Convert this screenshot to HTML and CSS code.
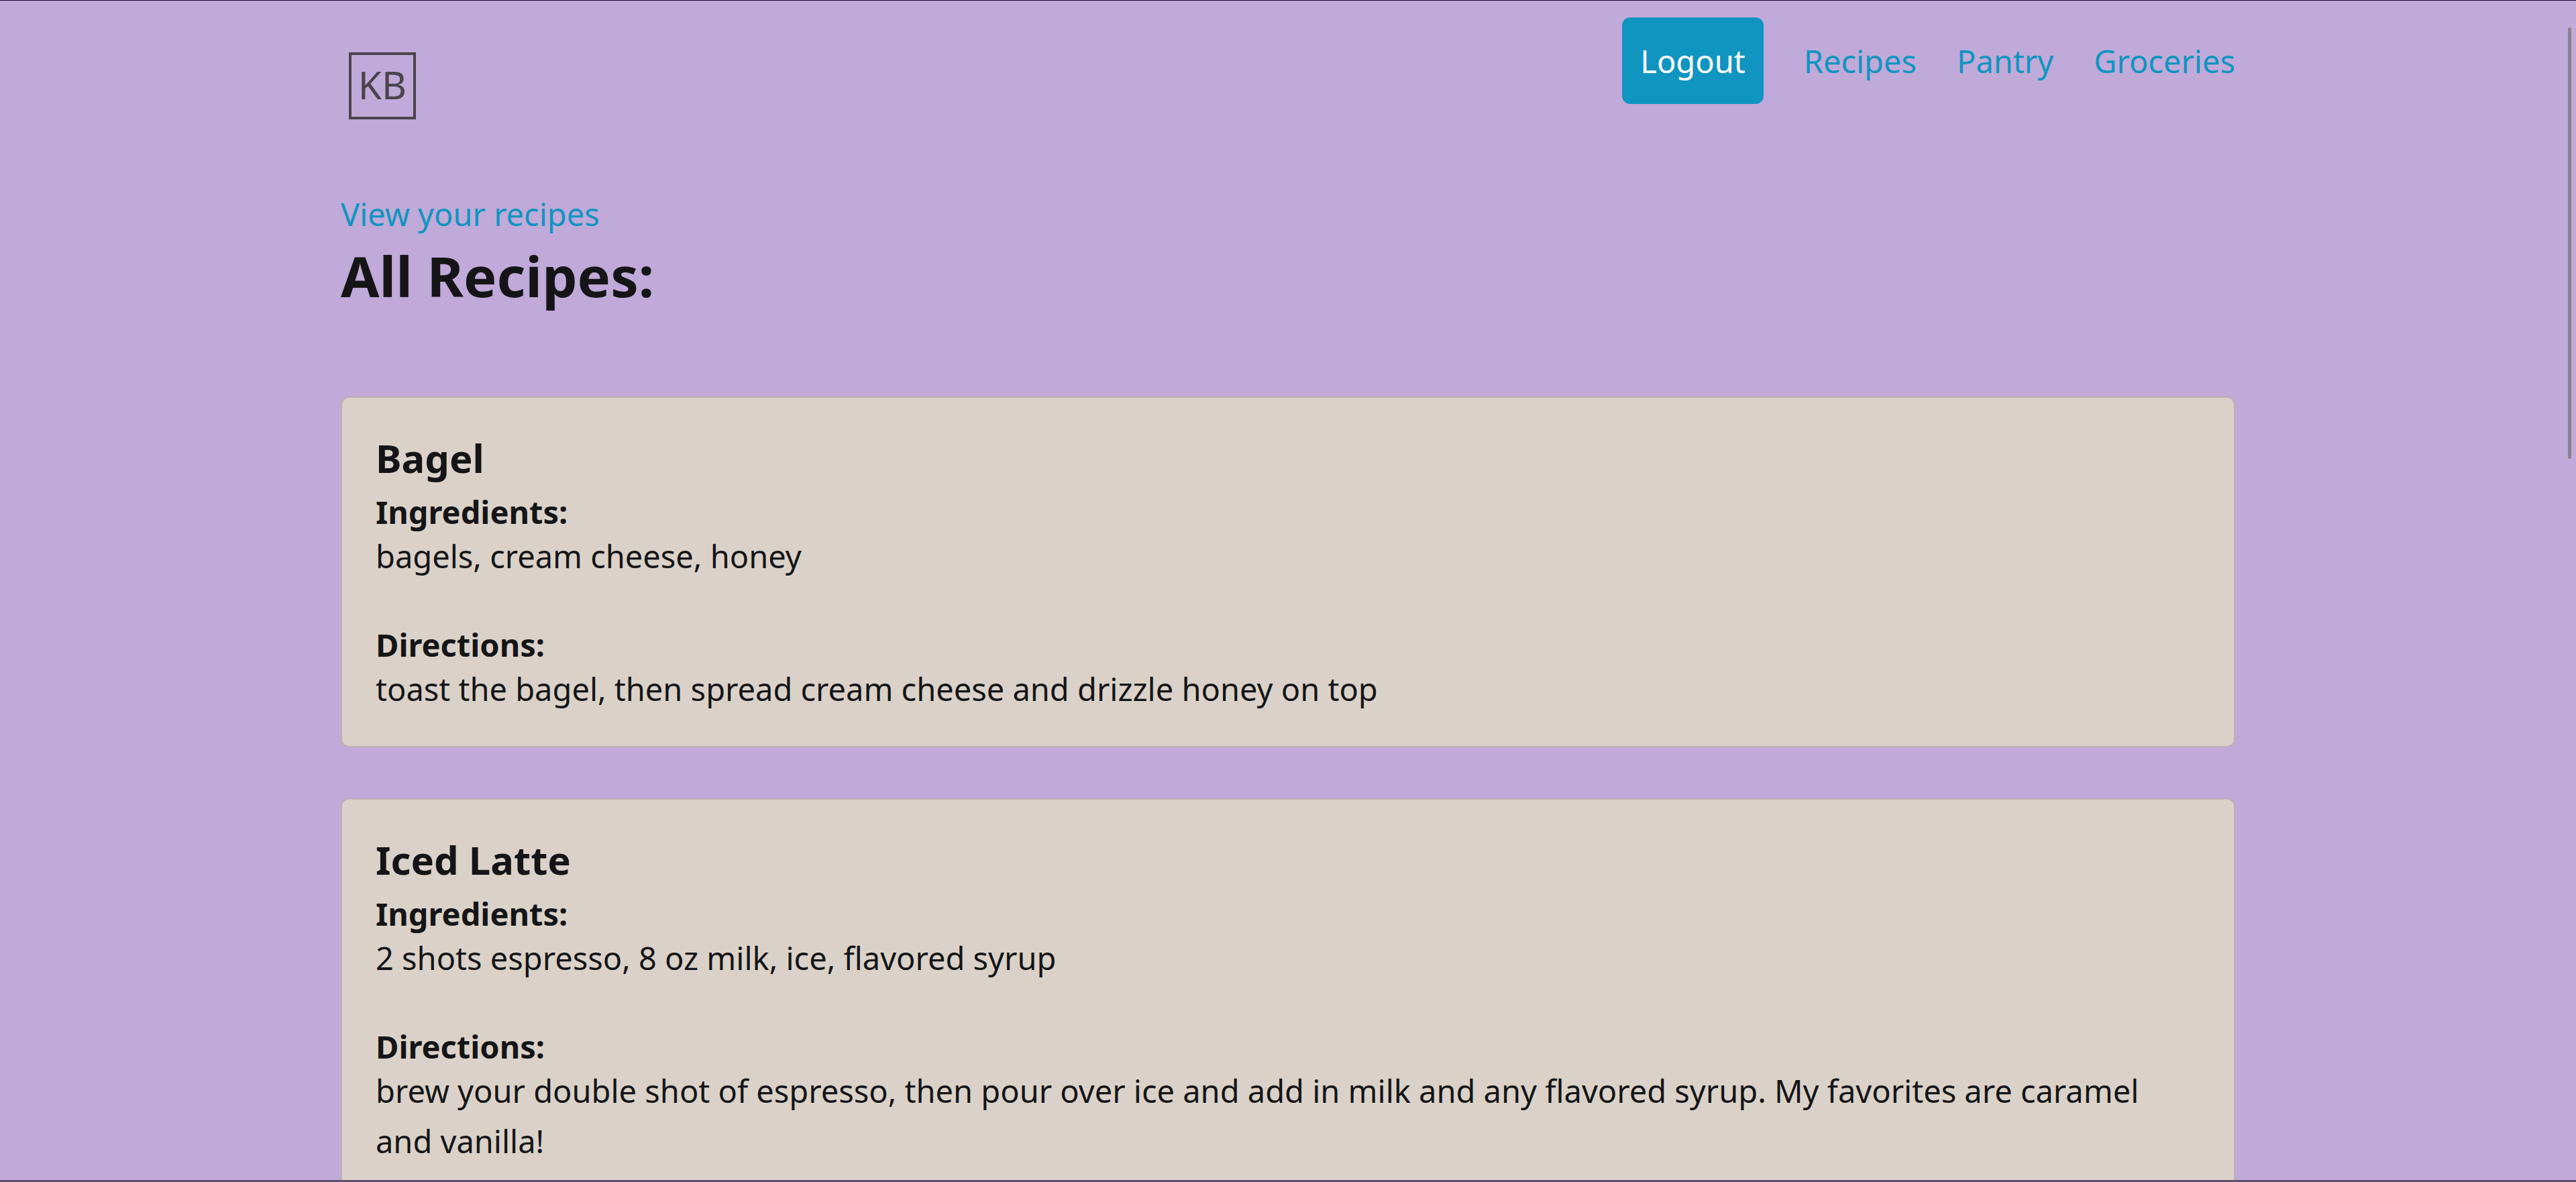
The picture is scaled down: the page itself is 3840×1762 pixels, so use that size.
FILE: index.html
```html
<!DOCTYPE html>
<html lang="en">
<head>
<meta charset="utf-8">
<meta name="viewport" content="width=device-width, initial-scale=1">
<title>All Recipes</title>
<link rel="stylesheet" href="styles.css">
</head>
<body>
<div class="page">
  <header class="container header">
    <a class="logo" href="#" aria-label="Home">
      <svg class="logo-mark" viewBox="0 0 100 100" width="100" height="100">
        <rect class="logo-frame" x="2" y="2" width="96" height="96"/>
        <text class="logo-text" x="50" y="70" text-anchor="middle">KB</text>
      </svg>
    </a>
    <nav class="nav">
      <button class="button" type="button">Logout</button>
      <a class="link" href="#">Recipes</a>
      <a class="link" href="#">Pantry</a>
      <a class="link" href="#">Groceries</a>
    </nav>
  </header>
  <main class="container">
    <a class="link" href="#">View your recipes</a>
    <h1 class="title">All Recipes:</h1>
    <div class="recipes">
      <article class="card">
        <h2 class="card-title">Bagel</h2>
        <section class="part">
          <h3 class="label">Ingredients:</h3>
          <p class="text">bagels, cream cheese, honey</p>
        </section>
        <section class="part">
          <h3 class="label">Directions:</h3>
          <p class="text">toast the bagel, then spread cream cheese and drizzle honey on top</p>
        </section>
      </article>
      <article class="card">
        <h2 class="card-title">Iced Latte</h2>
        <section class="part">
          <h3 class="label">Ingredients:</h3>
          <p class="text">2 shots espresso, 8 oz milk, ice, flavored syrup</p>
        </section>
        <section class="part">
          <h3 class="label">Directions:</h3>
          <p class="text">brew your double shot of espresso, then pour over ice and add in milk and any flavored syrup. My favorites are caramel and vanilla!</p>
        </section>
      </article>
    </div>
  </main>
</div>
<div class="scroll-thumb"></div>
</body>
</html>
```
FILE: styles.css
```css
* { box-sizing: border-box; }

body {
  margin: 0;
  background: #c0aad9;
  color: #151517;
  font: 47px/75px "Segoe UI", "Noto Sans", "Open Sans", sans-serif;
}

.page {
  height: 100vh;
  overflow: hidden;
  border-top: 1px solid #1a0030;
  border-bottom: 3px solid #5b4f70;
}

.container {
  max-width: 2824px;
  margin: 0 auto;
}

.header {
  display: flex;
  justify-content: space-between;
  align-items: flex-start;
  padding: 25px 0 104px;
}

.logo {
  display: block;
  padding: 52px 12px 0;
}
.logo-mark { display: block; }
.logo-frame { fill: none; stroke: #4b444c; stroke-width: 4; }
.logo-text { fill: #4b444c; font-size: 57px; }

.nav {
  display: flex;
  align-items: baseline;
  gap: 60px;
}

.link {
  color: #1095c1;
  text-decoration: none;
}

.button {
  padding: 28px 27px 26px;
  border: 0;
  border-radius: 12px;
  background: #1095c1;
  color: #fff;
  font: inherit;
}

.title {
  margin: 0 0 126px;
  font-size: 83px;
  line-height: 108px;
}

.recipes {
  display: grid;
  gap: 76px;
}

.card {
  padding: 50px 50px 47px;
  border: 2px solid #beb0b2;
  border-radius: 12px;
  background: #dad2c8;
}

.card-title {
  margin: 0 0 12px;
  font-size: 58px;
  line-height: 80px;
}

.part + .part { margin-top: 66px; }

.label {
  margin: 0;
  font-size: 47px;
  line-height: 57px;
}

.text { margin: 0; }

.scroll-thumb {
  position: fixed;
  top: 41px;
  right: 7px;
  width: 5px;
  height: 643px;
  border-radius: 3px;
  background: #88838a;
}
```
